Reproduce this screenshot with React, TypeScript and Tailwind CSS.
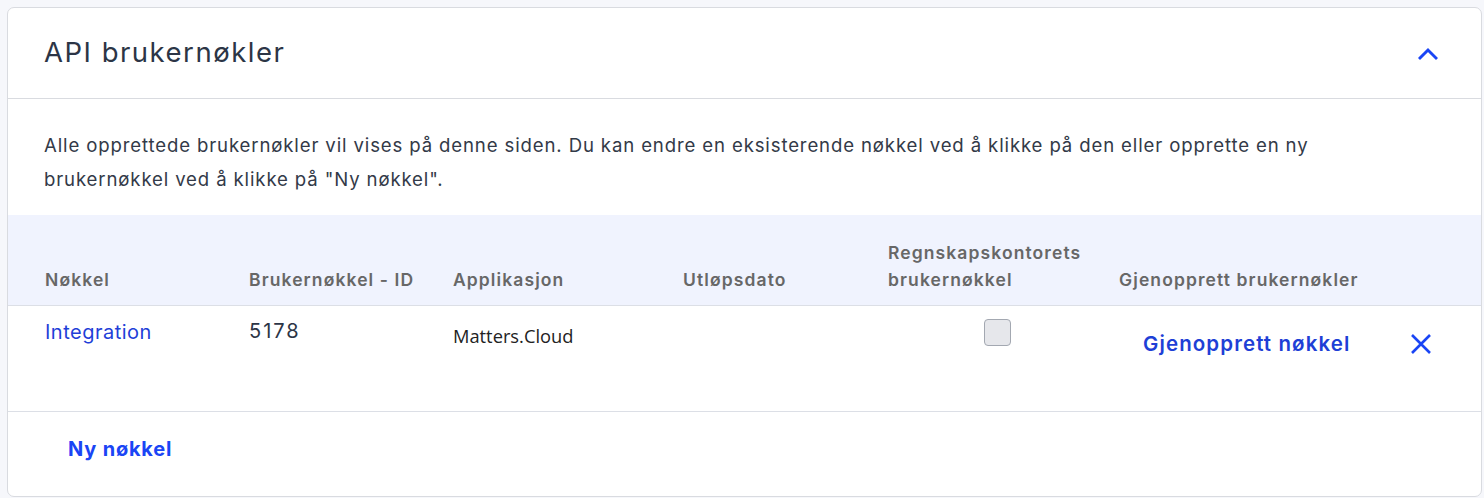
import React from "react";

const cols = "grid grid-cols-[204px_204px_230px_205px_231px_1fr] pl-[37px] pr-[48px]";

export default function App() {
  return (
    <div className="min-h-[498px] bg-[#f6f7fb] pt-[7px] pl-[7px] pr-[2px] pb-[1px] font-['Inter',sans-serif]">
      <div className="rounded-[7px] border border-[#d9dbe0] bg-white overflow-hidden">
        {/* Header */}
        <div className="flex h-[91px] items-center justify-between border-b border-[#d9dbe0] pl-[36px] pr-[43px]">
          <h1 className="text-[27.5px] font-normal text-[#2c3546] tracking-[1.5px]">API brukernøkler</h1>
          <svg width="20" height="14" viewBox="0 0 20 14" fill="none" className="mt-[2px]">
            <path d="M2 11 L10 3 L18 11" stroke="#1a45f5" strokeWidth="3" strokeLinecap="square" />
          </svg>
        </div>

        {/* Description */}
        <div className="pl-[36px] pr-[30px] pt-[29px] pb-[19px]">
          <p className="text-[18.6px] leading-[34px] tracking-[0.86px] text-[#333a48]">
            Alle opprettede brukernøkler vil vises på denne siden. Du kan endre en eksisterende nøkkel ved å klikke på den eller opprette en ny
            <br />
            brukernøkkel ved å klikke på "Ny nøkkel".
          </p>
        </div>

        {/* Table header */}
        <div className={`${cols} h-[91px] items-end bg-[#f0f3fe] border-b border-[#dcdfe6] pb-[12px] text-[17.5px] font-semibold leading-[27px] tracking-[1.1px] text-[#676767]`}>
          <div>Nøkkel</div>
          <div>Brukernøkkel - ID</div>
          <div>Applikasjon</div>
          <div>Utløpsdato</div>
          <div>
            Regnskapskontorets
            <br />
            brukernøkkel
          </div>
          <div>Gjenopprett brukernøkler</div>
        </div>

        {/* Row */}
        <div className={`${cols} h-[106px] border-b border-[#dcdfe6] items-start`}>
          <div className="pt-[14px] text-[20px] leading-[24px] tracking-[0.5px] text-[#1f3fd8]">Integration</div>
          <div className="pt-[13px] text-[20px] leading-[24px] tracking-[2px] text-[#2c3546]">5178</div>
          <div className="pt-[18px] text-[18.3px] leading-[24px] text-[#222] font-['Open_Sans',sans-serif]">Matters.Cloud</div>
          <div />
          <div className="pt-[13px] pl-[96px]">
            <div className="h-[27px] w-[27px] rounded-[4px] border border-[#a3a8b1] bg-[#e6e7eb]" />
          </div>
          <div className="flex items-center justify-between pt-[26px] pl-[24px]">
            <span className="text-[20.5px] leading-[24px] font-semibold tracking-[1.1px] text-[#1e3fd6]">Gjenopprett nøkkel</span>
            <svg width="22" height="22" viewBox="0 0 22 22" fill="none" className="mr-[1px]">
              <path d="M2 2 L20 20 M20 2 L2 20" stroke="#1a45f5" strokeWidth="2.6" />
            </svg>
          </div>
        </div>

        {/* Footer */}
        <div className="h-[84px] pl-[60px] pt-[25px]">
          <span className="text-[20px] leading-[24px] font-bold tracking-[0.8px] text-[#1a45f5]">Ny nøkkel</span>
        </div>
      </div>
    </div>
  );
}
